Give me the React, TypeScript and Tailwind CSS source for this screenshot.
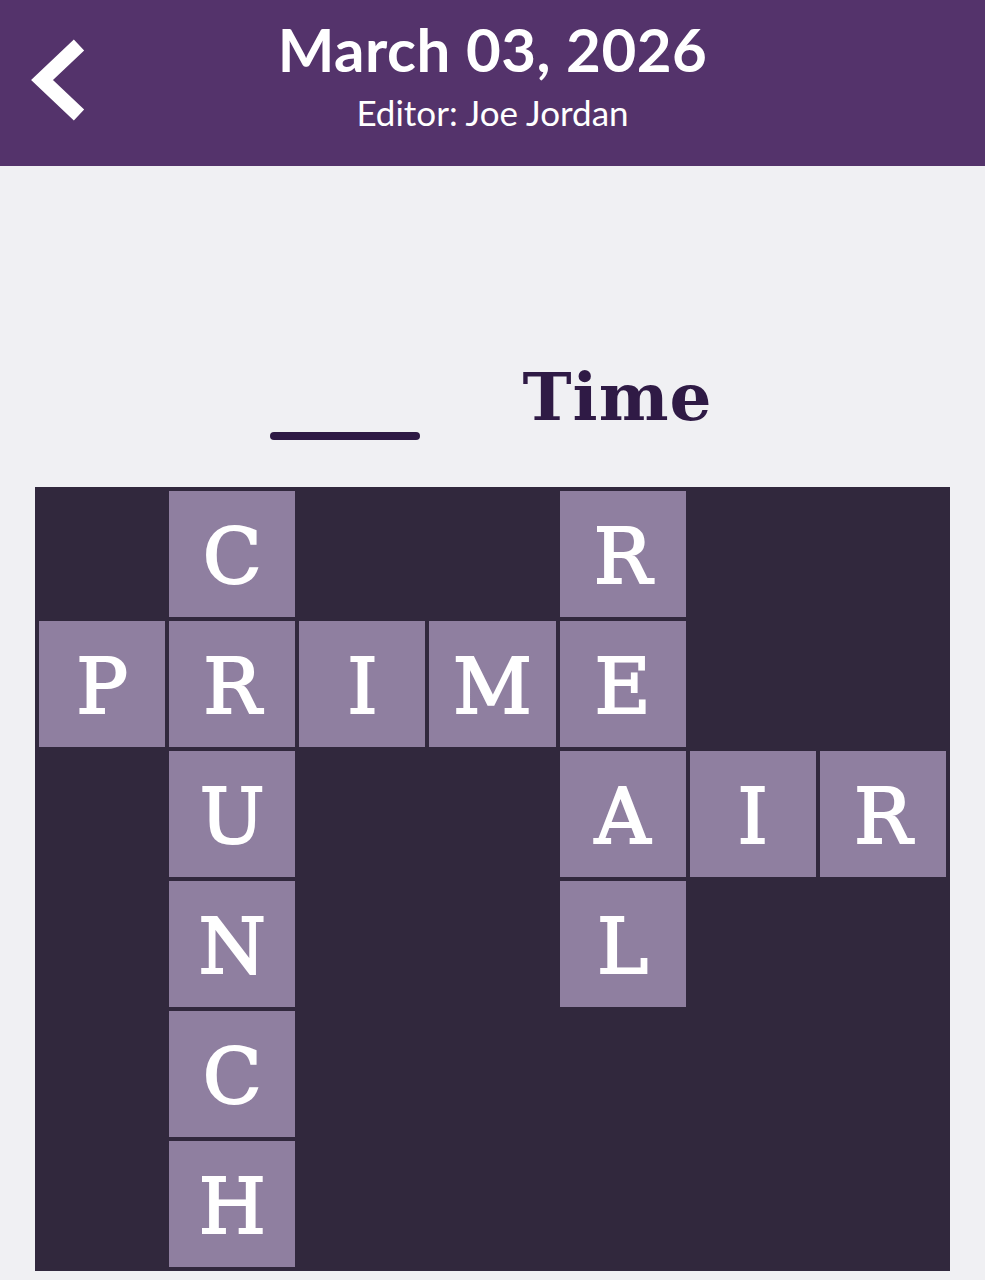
const rows = [
  ["", "C", "", "", "R", "", ""],
  ["P", "R", "I", "M", "E", "", ""],
  ["", "U", "", "", "A", "I", "R"],
  ["", "N", "", "", "L", "", ""],
  ["", "C", "", "", "", "", ""],
  ["", "H", "", "", "", "", ""],
];

function BackChevron() {
  return (
    <svg width="60" height="90" viewBox="0 0 60 90" className="block">
      <polyline
        points="49,7 12,42 49,77"
        fill="none"
        stroke="white"
        strokeWidth="15"
        strokeLinejoin="miter"
        strokeLinecap="butt"
      />
    </svg>
  );
}

export default function App() {
  return (
    <div className="min-h-[1280px] w-full bg-[#f0f0f3] font-['Lato','Noto_Sans',sans-serif]">
      {/* Header */}
      <header className="relative flex h-[166px] flex-col items-center bg-[#54336b] text-white">
        <button className="absolute left-[30px] top-[38px]">
          <BackChevron />
        </button>
        <h1 className="mt-[14px] text-[60px] font-bold leading-[70px] tracking-[0.5px]">
          March 03, 2026
        </h1>
        <p className="mt-[6px] text-[35px] leading-[44px]">Editor: Joe Jordan</p>
      </header>

      {/* Clue */}
      <div className="flex h-[321px] items-end justify-center gap-[102px] pb-[46px] pr-[2px]">
        <div className="mb-[1px] h-[8px] w-[150px] rounded-full bg-[#2f1a45]" />
        <span className="mb-[11px] font-['DejaVu_Serif',serif] text-[66px] font-bold leading-none tracking-[1px] text-[#2f1a45]">
          Time
        </span>
      </div>

      {/* Grid */}
      <div className="mx-[35px] grid w-[915px] grid-cols-7 gap-[4px] bg-[#31283d] p-[4px]">
        {rows.flat().map((ch, i) => (
          <div
            key={i}
            className={`flex h-[126px] items-center justify-center pt-[6px] font-['DejaVu_Serif',serif] text-[77px] text-white [-webkit-text-stroke:2px_white] ${
              ch ? "bg-[#8f7fa0]" : "bg-transparent"
            }`}
          >
            {ch}
          </div>
        ))}
      </div>
    </div>
  );
}
